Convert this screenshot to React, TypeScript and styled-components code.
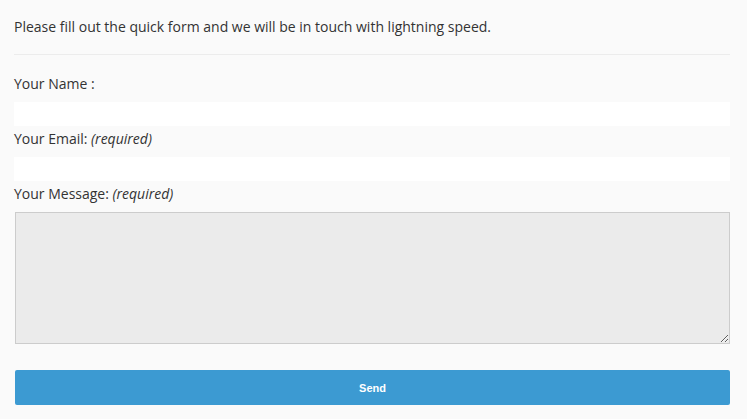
import styled, { createGlobalStyle } from "styled-components";

const GlobalStyle = createGlobalStyle`
  html, body {
    margin: 0;
    padding: 0;
    background: #fafafa;
  }
  * {
    box-sizing: border-box;
  }
`;

function App() {
  return (
    <>
      <GlobalStyle />
      <Page>
        <Intro>
          Please fill out the quick form and we will be in touch with lightning
          speed.
        </Intro>
        <Divider />
        <form onSubmit={(e) => e.preventDefault()}>
          <Label htmlFor="name">Your Name :</Label>
          <TextInput id="name" type="text" />

          <Label htmlFor="email" $spaced>
            Your Email: <em>(required)</em>
          </Label>
          <TextInput id="email" type="email" />

          <Label htmlFor="message" $spaced>
            Your Message: <em>(required)</em>
          </Label>
          <MessageArea id="message" />

          <SendButton type="submit">Send</SendButton>
        </form>
      </Page>
    </>
  );
}

export default App;

const Page = styled.div`
  width: 716px;
  margin-left: 14px;
  padding-top: 17px;
  font-family: "Open Sans", "Liberation Sans", sans-serif;
  color: #333333;
`;

const Intro = styled.p`
  margin: 0;
  font-size: 14px;
  line-height: 20px;
`;

const Divider = styled.hr`
  margin: 17px 0 19px 0;
  border: none;
  border-top: 1px solid #ececec;
`;

const Label = styled.label<{ $spaced?: boolean }>`
  display: block;
  font-size: 14px;
  line-height: 20px;
  margin-top: ${(p) => (p.$spaced ? "3px" : "0")};
  margin-bottom: 8px;
  em {
    font-style: italic;
  }
`;

const TextInput = styled.input`
  display: block;
  width: 100%;
  height: 24px;
  border: none;
  background: #ffffff;
  outline: none;
  padding: 0 6px;
  font-family: inherit;
`;

const MessageArea = styled.textarea`
  display: block;
  width: 715px;
  margin-left: 1px;
  height: 132px;
  background: #ebebeb;
  border: 1px solid #cccccc;
  resize: both;
  font-family: inherit;
`;

const SendButton = styled.button`
  display: block;
  width: 715px;
  margin: 26px 0 0 1px;
  height: 35px;
  border: none;
  border-radius: 2px;
  background: #3c9ad2;
  color: #ffffff;
  font-family: "Liberation Sans", Arial, sans-serif;
  font-size: 11px;
  font-weight: 700;
  cursor: pointer;
`;
